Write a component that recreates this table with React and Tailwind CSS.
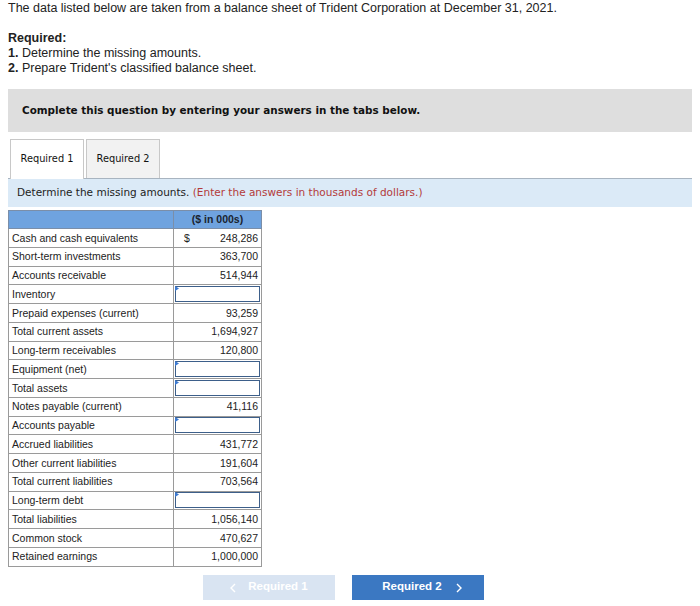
import React from "react";

const rows = [
  ["Cash and cash equivalents", "248,286", true],
  ["Short-term investments", "363,700"],
  ["Accounts receivable", "514,944"],
  ["Inventory", null],
  ["Prepaid expenses (current)", "93,259"],
  ["Total current assets", "1,694,927"],
  ["Long-term receivables", "120,800"],
  ["Equipment (net)", null],
  ["Total assets", null],
  ["Notes payable (current)", "41,116"],
  ["Accounts payable", null],
  ["Accrued liabilities", "431,772"],
  ["Other current liabilities", "191,604"],
  ["Total current liabilities", "703,564"],
  ["Long-term debt", null],
  ["Total liabilities", "1,056,140"],
  ["Common stock", "470,627"],
  ["Retained earnings", "1,000,000"],
];

const Chevron = ({ left }) => (
  <svg width="6" height="10" viewBox="0 0 6 10" className="mt-[1px]">
    <path
      d={left ? "M5 1 L1 5 L5 9" : "M1 1 L5 5 L1 9"}
      fill="none"
      stroke="currentColor"
      strokeWidth="1.4"
    />
  </svg>
);

const App = () => {
  return (
    <div className="w-[700px] h-[606px] bg-white text-[#222] overflow-hidden">
      <div className="px-2 pt-[1px] font-['Liberation_Sans',Arial,sans-serif] text-[12.5px] leading-[15px]">
        <p>The data listed below are taken from a balance sheet of Trident Corporation at December 31, 2021.</p>
        <p className="mt-[15px] font-bold">Required:</p>
        <p><span className="font-bold">1.</span> Determine the missing amounts.</p>
        <p><span className="font-bold">2.</span> Prepare Trident's classified balance sheet.</p>
      </div>

      <div className="mx-2 mt-[13px] h-[43px] bg-[#dedede] flex items-center px-[14px] font-['DejaVu_Sans',Verdana,sans-serif] text-[10.4px] font-bold text-[#111]">
        Complete this question by entering your answers in the tabs below.
      </div>

      <div className="mx-2 mt-[6px] flex items-end gap-[2px] pl-[2px] font-['DejaVu_Sans',Verdana,sans-serif] text-[9.8px] text-[#111]">
        <div className="w-[74px] h-[40px] flex items-center justify-center bg-white border border-[#c8c8c8] border-b-0 relative top-[1px]">
          Required 1
        </div>
        <div className="w-[74px] h-[39px] flex items-center justify-center bg-[#f2f2f2] border border-[#c8c8c8] border-b-0">
          Required 2
        </div>
      </div>
      <div className="mx-2 h-[29px] bg-[#dbeaf7] border-t border-[#a8b4c0] flex items-center px-[9px] font-['DejaVu_Sans',Verdana,sans-serif] text-[10.5px] text-[#222]">
        Determine the missing amounts.&nbsp;<span className="text-[#b33a3a]">(Enter the answers in thousands of dollars.)</span>
      </div>

      <table className="ml-2 mt-[3px] w-[254px] border-collapse font-['Liberation_Sans',Arial,sans-serif] text-[10.5px] text-[#222]">
        <thead>
          <tr className="h-[18px] bg-[#6fa3df]">
            <th className="border border-[#7b8ea8] w-[165px]"></th>
            <th className="border border-[#7b8ea8] font-bold text-[10.5px] text-[#1a2330]">($ in 000s)</th>
          </tr>
        </thead>
        <tbody>
          {rows.map(([label, value, dollar]) => (
            <tr key={label} className="h-[18.75px]">
              <td className="border border-[#9a9a9a] pl-[3px] py-0 leading-none">{label}</td>
              <td className="border border-[#9a9a9a] p-0 leading-none">
                {value ? (
                  <div className="flex justify-between pr-[3px] pl-[10px]">
                    <span>{dollar ? "$" : ""}</span>
                    <span>{value}</span>
                  </div>
                ) : (
                  <div className="h-[16px] mx-[1px] border border-[#3d5f8a] bg-white relative">
                    <svg className="absolute -left-[1px] -top-[1px]" width="4" height="5" viewBox="0 0 4 5">
                      <path d="M0 0 L4 2.5 L0 5 Z" fill="#3d7ad0" />
                    </svg>
                  </div>
                )}
              </td>
            </tr>
          ))}
        </tbody>
      </table>

      <div className="mt-[8px] flex gap-[17px] pl-[203px] font-['Liberation_Sans',Arial,sans-serif] text-[11.5px] font-bold">
        <div className="w-[132px] h-[25px] bg-[#d9e4f2] text-white flex items-center justify-center gap-[12px]">
          <Chevron left />
          <span>Required 1</span>
        </div>
        <div className="w-[132px] h-[25px] bg-[#3b78c2] text-white flex items-center justify-center gap-[14px] pl-[8px]">
          <span>Required 2</span>
          <Chevron />
        </div>
      </div>
    </div>
  );
};

export default App;
